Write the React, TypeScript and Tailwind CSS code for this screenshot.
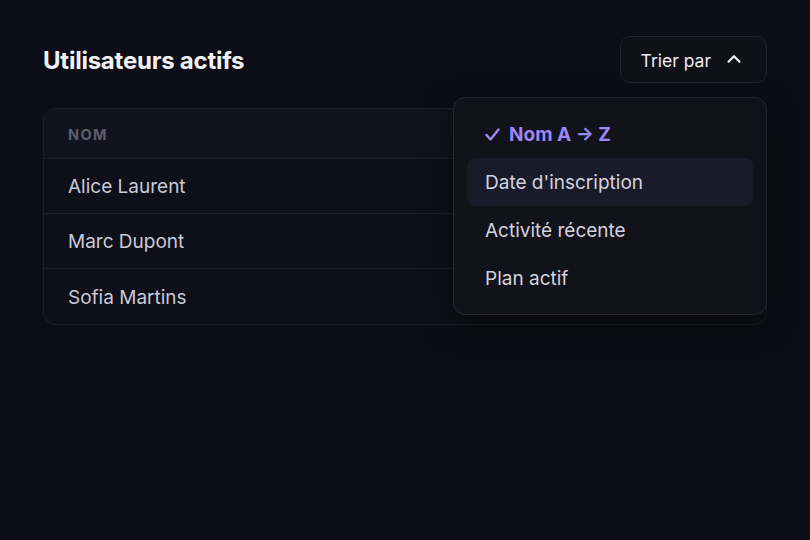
import { ChevronUp } from "lucide-react";

const users = ["Alice Laurent", "Marc Dupont", "Sofia Martins"];
const options = ["Date d'inscription", "Activité récente", "Plan actif"];

export default function App() {
  return (
    <div className="min-h-[540px] w-full bg-[#0d0d17] px-[43px] pt-[36px] font-['Inter',sans-serif]">
      <div className="relative">
        <div className="flex items-center justify-between">
          <h2 className="pt-[2px] text-[24px] font-bold tracking-[-0.01em] text-[#f1f1f6]">Utilisateurs actifs</h2>
          <button className="flex h-[47px] items-center gap-[12px] rounded-[10px] border border-[#23232e] bg-[#101019] pl-[20px] pr-[21px] pt-[4px] text-[17.5px] text-[#ededf3]">
            Trier par
            <ChevronUp size={22} strokeWidth={2.4} className="-mt-[5px]" />
          </button>
        </div>

        <div className="mt-[25px] overflow-hidden rounded-[12px] border border-[#1f1f2a] bg-[#0f0f19]">
          <div className="flex h-[50px] items-center border-b border-[#1f1f2a] bg-[#13131d] px-[24px] pt-[2px] text-[14.5px] font-bold tracking-[0.1em] text-[#5d5d6e]">
            NOM
          </div>
          {users.map((u, i) => (
            <div
              key={u}
              className={`flex h-[55px] items-center px-[24px] pt-[3px] text-[19px] text-[#c9c9d6] ${i < users.length - 1 ? "border-b border-[#1f1f2a]" : ""}`}
            >
              {u}
            </div>
          ))}
        </div>

        <div className="absolute right-0 top-[61px] w-[314px] rounded-[12px] border border-[#262632] bg-[#12121b] px-[13px] py-[12px] shadow-[0_10px_30px_rgba(0,0,0,0.5)]">
          <div className="flex h-[48px] items-center gap-[9px] px-[18px] pt-[2px] text-[19px] font-bold text-[#9b87f5]">
            <svg width="15" height="13" viewBox="0 0 15 13" fill="none" className="-mt-[1px]">
              <path d="M1.5 7 L5.5 11.5 L13.5 1.5" stroke="currentColor" strokeWidth="2.4" strokeLinecap="round" strokeLinejoin="round" />
            </svg>
            <span>Nom A → Z</span>
          </div>
          {options.map((o, i) => (
            <div
              key={o}
              className={`flex h-[48px] items-center rounded-[8px] px-[18px] pt-[2px] text-[19px] text-[#d3d3de] ${i === 0 ? "bg-[#1a1a2b]" : ""}`}
            >
              {o}
            </div>
          ))}
        </div>
      </div>
    </div>
  );
}
